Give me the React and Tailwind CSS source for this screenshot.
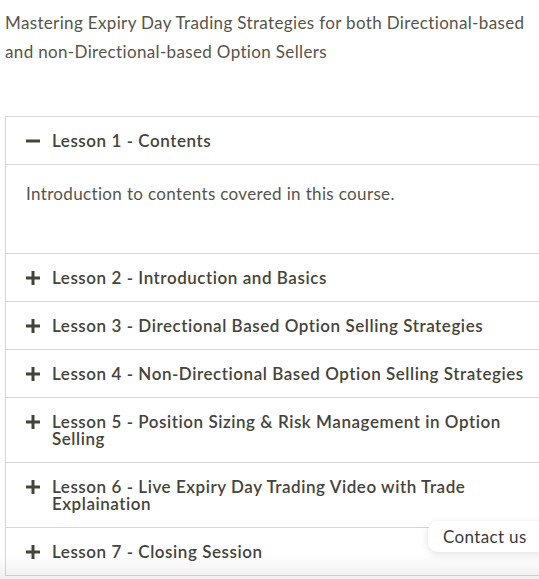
import React from "react";

const lessons = [
  { t: "Lesson 1 - Contents", open: true },
  { t: "Lesson 2 - Introduction and Basics" },
  { t: "Lesson 3 - Directional Based Option Selling Strategies" },
  { t: "Lesson 4 - Non-Directional Based Option Selling Strategies" },
  { t: "Lesson 5 - Position Sizing & Risk Management in Option Selling" },
  { t: "Lesson 6 - Live Expiry Day Trading Video with Trade Explaination" },
  { t: "Lesson 7 - Closing Session" },
];

function Plus() {
  return (
    <svg width="14" height="14" viewBox="0 0 14 14" className="shrink-0 mt-[1.5px]">
      <rect x="0" y="5.5" width="14" height="3" fill="#45443a" />
      <rect x="5.5" y="0" width="3" height="14" fill="#45443a" />
    </svg>
  );
}
function Minus() {
  return (
    <svg width="14" height="14" viewBox="0 0 14 14" className="shrink-0 mt-[1.5px]">
      <rect x="0" y="5.5" width="14" height="3" fill="#45443a" />
    </svg>
  );
}

export default function App() {
  return (
    <div
      className="relative w-[539px] h-[579px] overflow-hidden bg-white"
      style={{ fontFamily: "Lato, 'Noto Sans', sans-serif" }}
    >
      <p className="pl-[5px] pr-[8px] pt-[8px] text-[17px] leading-[29px] tracking-[0.35px] text-[#55544c]">
        Mastering Expiry Day Trading Strategies for both Directional-based and non-Directional-based Option Sellers
      </p>
      <div className="ml-[5px] mt-[50px] w-[560px] border border-[#d6d8dc]">
        {lessons.map((l, i) => (
          <div key={i} className={i > 0 ? "border-t border-[#d6d8dc]" : ""}>
            <div className="flex items-start gap-[12px] pl-[20px] pt-[15px] pb-[15px]">
              {l.open ? <Minus /> : <Plus />}
              <span className="w-[476px] text-[17px] leading-[17px] tracking-[0.55px] font-semibold text-[#45443a]">
                {l.t}
              </span>
            </div>
            {l.open && (
              <div className="border-t border-[#d6d8dc] pl-[20px] pt-[15px] pb-[45px] text-[17px] leading-[28px] tracking-[0.35px] text-[#55544c]">
                Introduction to contents covered in this course.
              </div>
            )}
          </div>
        ))}
      </div>
      <div className="pointer-events-none absolute left-0 right-0 bottom-0 h-[26px] bg-gradient-to-b from-transparent to-[rgba(0,0,0,0.06)]" />
      <div className="absolute left-[428px] top-[521px] h-[31px] w-[130px] rounded-[10px] bg-white pl-[15px] flex items-center text-[17px] tracking-[0.35px] text-[#3a3a3a] shadow-[0_2px_8px_rgba(0,0,0,0.12)]">
        Contact us
      </div>
    </div>
  );
}
